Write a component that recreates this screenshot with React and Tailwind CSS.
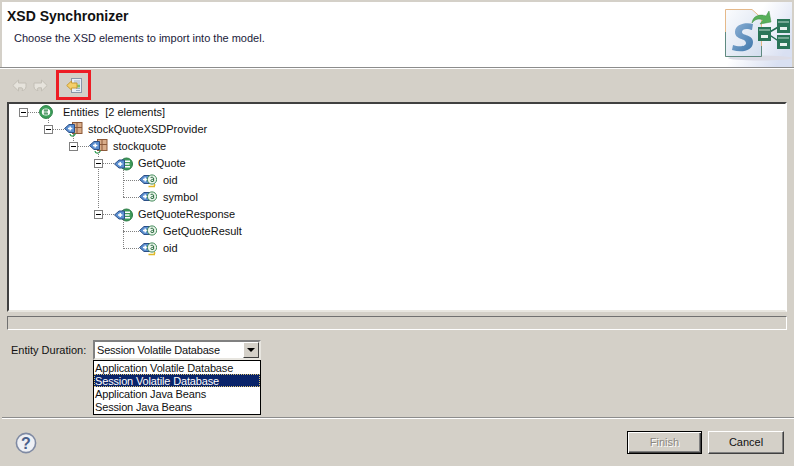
import React from "react";

const BlueTag = ({ x = 0, y = 0 }) => (
  <g transform={`translate(${x} ${y})`}>
    <path d="M0.5 5.5 L5 1.5 H10.5 V9.5 H5 Z" fill="#5b8fd0" stroke="#2c4f86" />
    <path d="M4 5.5 H8.4 M6.2 3.4 V7.6" stroke="#fff" strokeWidth="1.5" />
  </g>
);

const EntityBadge = () => (
  <svg width="19" height="14" viewBox="0 0 19 14" className="shrink-0">
    <circle cx="12.5" cy="7" r="6" fill="#3f9a5a" stroke="#2a7a44" />
    <path d="M11 4.3 H16 M11 7 H15.5 M11 9.7 H16" stroke="#fff" strokeWidth="1.4" />
    <BlueTag y="1.5" />
  </svg>
);

const EntityRoot = () => (
  <svg width="16" height="15" viewBox="0 0 16 15" className="shrink-0">
    <circle cx="7" cy="7" r="6.4" fill="#3ea05b" stroke="#2b8046" />
    <ellipse cx="7" cy="7" rx="4.2" ry="3.6" fill="#fff" />
    <path d="M4.8 5.2 H9 M4.8 7 H8.6 M4.8 8.8 H9" stroke="#2b8046" strokeWidth="1.2" />
  </svg>
);

const PackageIcon = () => (
  <svg width="19" height="16" viewBox="0 0 19 16" className="shrink-0">
    <rect x="8.5" y="0.5" width="9.5" height="11" fill="#d9ad8a" stroke="#8d5a3a" />
    <path d="M13 0.5 V11.5 M8.5 5.5 H18" stroke="#8d5a3a" />
    <BlueTag y="1" />
    <path d="M6 12 C6.5 15 10 15 11.5 11.5" fill="none" stroke="#2d9c4e" strokeWidth="1.3" />
  </svg>
);

const AttrIcon = ({ keyed }) => (
  <svg width="18" height="15" viewBox="0 0 18 15" className="shrink-0">
    <BlueTag y="1" />
    <circle cx="13" cy="6.5" r="4.6" fill="#eef6ee" stroke="#3f8a57" />
    <path d="M14.6 8.5 V5 C14 3.8 11.8 4 11.4 5 M14.5 6.5 C12 5.6 10.8 8.6 13 8.7 C13.8 8.7 14.3 8.2 14.5 7.8" fill="none" stroke="#2c6e42" />
    {keyed && <path d="M9.5 13.5 H16 M15.5 11 V13" stroke="#e0b828" strokeWidth="1.5" fill="none" />}
  </svg>
);

const Expander = () => (
  <span className="relative w-[9px] h-[9px] shrink-0 border border-[#808080] bg-white flex items-center justify-center">
    <span className="w-[5px] h-px bg-black" />
  </span>
);

const Dots = ({ w }) => <span className={`${w} h-px shrink-0 border-t border-dotted border-[#808080]`} />;

const TreeRow = ({ indent, expander, dots, icon, gap, children }) => (
  <div className={`h-[17px] flex items-center ${indent}`}>
    {expander && <Expander />}
    <Dots w={dots} />
    {icon}
    <span className={`${gap} text-[11px] leading-none text-[#111] whitespace-pre`}>{children}</span>
  </div>
);

const DiagramBanner = () => (
  <svg width="68" height="65" viewBox="0 0 68 65" className="shrink-0">
    <defs>
      <linearGradient id="bannerBg" x1="0" y1="0" x2="1" y2="0.6">
        <stop offset="0.45" stopColor="#fff" />
        <stop offset="1" stopColor="#d9e0f2" />
      </linearGradient>
      <linearGradient id="pageBg" x1="0" y1="0" x2="1" y2="1">
        <stop offset="0" stopColor="#fbfcfe" />
        <stop offset="1" stopColor="#d3deee" />
      </linearGradient>
      <linearGradient id="sLetter" x1="0" y1="0" x2="1" y2="1">
        <stop offset="0" stopColor="#8fb2d6" />
        <stop offset="1" stopColor="#3f78ac" />
      </linearGradient>
    </defs>
    <rect width="68" height="65" fill="url(#bannerBg)" />
    <ellipse cx="36" cy="56" rx="32" ry="2.5" fill="#dcdce6" />
    <path d="M1.5 7.5 H28 L37.5 16 V54.5 H1.5 Z" fill="url(#pageBg)" stroke="#e5b98a" />
    <path d="M1.5 30 V54.5 H37.5 V44" fill="none" stroke="#5f8a80" />
    <path d="M29 22 C22 20 11 22 11 30 C11 38 22 36 22 41 C22 45 14 45 9 43 L8 48 C18 51 29 49 29 40 C29 32 18 34 18 30 C18 26 24 26.5 28 28 Z" fill="url(#sLetter)" />
    <path d="M28 21 C29 13 37 12 42 14 L45 9 L47 20 L36 22 L39 18 C35 16 31 17 28 21 Z" fill="#58b05a" stroke="#3f8e46" strokeWidth="0.5" />
    <path d="M44 31 L56 24 M44 32 L56 40" stroke="#1f6a50" strokeWidth="1.5" />
    {[[34, 25], [53, 17], [53, 33]].map(([x, y]) => (
      <g key={x + "-" + y}>
        <rect x={x} y={y} width="13" height="14" fill="#2a7558" />
        <rect x={x + 1} y={y + 2} width="11" height="2" fill="#74a893" />
        <rect x={x + 3} y={y + 8} width="7" height="3" fill="#e8f2ee" />
      </g>
    ))}
  </svg>
);

const GrayArrow = ({ flip }) => (
  <svg width="15" height="14" viewBox="0 0 15 14" className={flip ? "-scale-x-100" : ""}>
    <path d="M0.8 7.5 L6.5 2 V5 H14 V8.5 C14 11 12 12.5 10 12.5 C11 11 11 9.8 9 9.8 H6.5 V13 Z" fill="#e6e3dc" stroke="#c2beb5" />
  </svg>
);

const ImportIcon = () => (
  <svg width="16" height="15" viewBox="0 0 16 15">
    <rect x="5.5" y="0.5" width="10" height="14" fill="#e8eef6" stroke="#8a97a8" />
    <path d="M8 3 H14 M8 5 H14 M10 10.5 H14 M10 12.5 H14" stroke="#9db0c6" />
    <rect x="11" y="6.5" width="3" height="3" fill="#7fbf6a" />
    <path d="M0.7 7.5 L5.5 3 V5 H11 V10 H5.5 V12 Z" fill="#f4cf6a" stroke="#c79a35" />
  </svg>
);

const rows = [
  { indent: "pl-[10px]", expander: true, dots: "w-[11px]", icon: <EntityRoot />, gap: "ml-[8px]", label: "Entities  [2 elements]" },
  { indent: "pl-[35px]", expander: true, dots: "w-[11px]", icon: <PackageIcon />, gap: "ml-[5px]", label: "stockQuoteXSDProvider" },
  { indent: "pl-[60px]", expander: true, dots: "w-[11px]", icon: <PackageIcon />, gap: "ml-[5px]", label: "stockquote" },
  { indent: "pl-[85px]", expander: true, dots: "w-[11px]", icon: <EntityBadge />, gap: "ml-[5px]", label: "GetQuote" },
  { indent: "pl-[114px]", dots: "w-[16px]", icon: <AttrIcon keyed />, gap: "ml-[6px]", label: "oid" },
  { indent: "pl-[114px]", dots: "w-[16px]", icon: <AttrIcon />, gap: "ml-[6px]", label: "symbol" },
  { indent: "pl-[85px]", expander: true, dots: "w-[11px]", icon: <EntityBadge />, gap: "ml-[5px]", label: "GetQuoteResponse" },
  { indent: "pl-[114px]", dots: "w-[16px]", icon: <AttrIcon />, gap: "ml-[6px]", label: "GetQuoteResult" },
  { indent: "pl-[114px]", dots: "w-[16px]", icon: <AttrIcon keyed />, gap: "ml-[6px]", label: "oid" },
];

const durations = ["Application Volatile Database", "Session Volatile Database", "Application Java Beans", "Session Java Beans"];

// vertical dotted guides of the tree
const TreeGuides = () => (
  <svg className="absolute left-0 top-0 pointer-events-none" width="200" height="160">
    <path
      d="M39.5 14 V20 M64.5 30 V37 M89.5 48 V54 M89.5 63 V105 M114.5 66 V93 M114.5 116 V143"
      stroke="#808080"
      strokeDasharray="1 1"
      fill="none"
    />
  </svg>
);

export default function App() {
  return (
    <div className="relative w-[794px] h-[466px] overflow-hidden bg-[#d4d0c8] flex flex-col font-['Liberation_Sans',Arial,sans-serif] text-[11px] text-black">
      {/* banner */}
      <header className="ml-[2px] mr-[2px] mt-[2px] h-[65px] shrink-0 bg-white flex justify-between">
        <div>
          <h1 className="pl-[5px] pt-[4px] text-[14px] leading-[20px] font-bold text-[#111]">XSD Synchronizer</h1>
          <p className="pl-[12px] pt-[4px] text-[11px] leading-[16px] text-[#1a1a3a]">Choose the XSD elements to import into the model.</p>
        </div>
        <DiagramBanner />
      </header>
      <div className="h-px shrink-0 bg-[#8c8c8c]" />
      <div className="h-px shrink-0 bg-white" />

      {/* toolbar */}
      <div className="h-[32px] shrink-0 flex items-center pl-[12px]">
        <GrayArrow />
        <span className="ml-[6px]"><GrayArrow flip /></span>
        <span className="ml-[8px] w-[35px] h-[30px] border-[3px] border-[#ed1c24] flex items-center justify-center">
          <ImportIcon />
        </span>
      </div>

      {/* tree */}
      <main className="relative mx-[7px] mt-px h-[210px] shrink-0 bg-white border-2 border-t-[#404040] border-l-[#404040] border-r-[#ffffff] border-b-[#e8e6e0]">
        <TreeGuides />
        {rows.map((r) => (
          <TreeRow key={r.indent + r.label} {...r}>
            {r.label}
          </TreeRow>
        ))}
      </main>

      {/* status bar */}
      <div className="mx-[7px] mt-[4px] h-[14px] shrink-0 border border-t-[#707070] border-l-[#707070] border-r-white border-b-white" />

      {/* duration */}
      <div className="relative mt-[10px] h-[20px] shrink-0 flex items-center pl-[11px]">
        <span className="w-[82px] text-[#111] whitespace-nowrap">Entity Duration:</span>
        <div className="w-[168px] h-[20px] bg-white border-2 border-t-[#808080] border-l-[#808080] border-r-[#e8e6e0] border-b-[#e8e6e0] flex items-center justify-between">
          <span className="pl-[2px] text-[#111] whitespace-nowrap tracking-[-0.2px]">Session Volatile Database</span>
          <span className="w-[16px] h-[16px] bg-[#d4d0c8] border border-t-white border-l-white border-r-[#404040] border-b-[#404040] flex items-center justify-center">
            <span className="w-0 h-0 border-x-[4px] border-x-transparent border-t-[4px] border-t-black" />
          </span>
        </div>
        <ul className="absolute left-[93px] top-[20px] w-[168px] h-[55px] bg-white border border-black z-10 tracking-[-0.15px]">
          {durations.map((d, i) => (
            <li
              key={d}
              className={
                i === 1
                  ? "h-[13px] leading-[14px] pl-[1px] bg-[#0a246a] text-white outline-dotted outline-1 -outline-offset-1 outline-[#d8c070] whitespace-nowrap"
                  : "h-[13px] leading-[14px] pl-[1px] text-[#111] whitespace-nowrap"
              }
            >
              {d}
            </li>
          ))}
        </ul>
      </div>

      <div className="h-[57px] shrink-0" />
      <div className="ml-[2px] h-px shrink-0 bg-[#8c8c8c]" />
      <div className="ml-[2px] h-px shrink-0 bg-white" />

      {/* footer */}
      <footer className="flex-1 flex items-start justify-between pl-[15px] pr-[10px] pt-[12px]">
        <svg width="22" height="22" viewBox="0 0 22 22" className="mt-[1px]">
          <circle cx="11" cy="11" r="9.6" fill="#eef0f5" stroke="#7f8aa3" strokeWidth="1.6" />
          <text x="11" y="16.5" textAnchor="middle" fontSize="16" fontWeight="700" fill="#4a5f8a" fontFamily="Liberation Sans">?</text>
        </svg>
        <div className="flex gap-[6px]">
          <button className="w-[75px] h-[23px] bg-[#d4d0c8] border border-black shadow-[inset_1px_1px_0_#fff,inset_-1px_-1px_0_#404040,inset_-2px_-2px_0_#808080] text-[#8a8780] [text-shadow:1px_1px_0_#fff]">Finish</button>
          <button className="w-[76px] h-[23px] bg-[#d4d0c8] border border-t-white border-l-white border-r-[#404040] border-b-[#404040] shadow-[inset_-1px_-1px_0_#808080] text-[#111]">Cancel</button>
        </div>
      </footer>
    </div>
  );
}
